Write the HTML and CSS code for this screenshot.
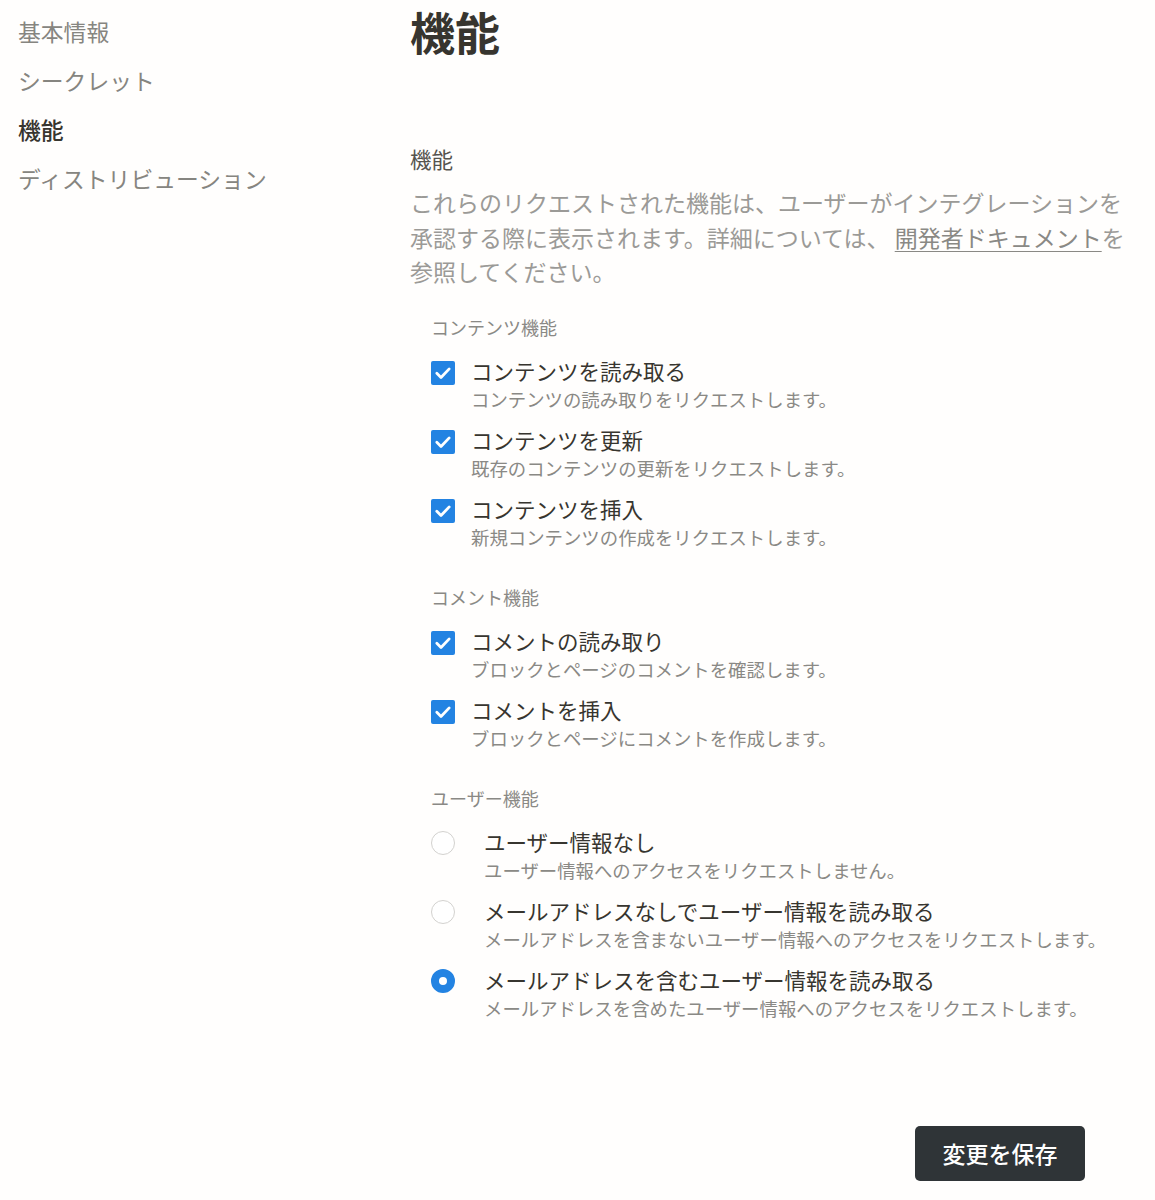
FILE: index.html
```html
<!DOCTYPE html>
<html lang="ja">
<head>
<meta charset="utf-8">
<title>機能</title>
<link rel="stylesheet" href="styles.css">
</head>
<body>
<div class="layout">
  <nav class="sidebar">
    <div class="nav-item">基本情報</div>
    <div class="nav-item">シークレット</div>
    <div class="nav-item active">機能</div>
    <div class="nav-item">ディストリビューション</div>
  </nav>
  <main class="main">
    <h1 class="title">機能</h1>
    <section class="section">
      <div class="section-label">機能</div>
      <p class="section-desc">これらのリクエストされた機能は、ユーザーがインテグレーションを承認する際に表示されます。詳細については、 <a class="link">開発者ドキュメント</a>を参照してください。</p>

      <div class="group">
        <div class="group-label">コンテンツ機能</div>
        <div class="option">
          <span class="checkbox"><svg viewBox="0 0 24 24" width="24" height="24"><path d="M5.8 12.3l4.2 4.2 8.2-8.6" fill="none" stroke="#fff" stroke-width="2.8" stroke-linecap="round" stroke-linejoin="round"/></svg></span>
          <div class="option-text">
            <div class="option-title">コンテンツを読み取る</div>
            <div class="option-desc">コンテンツの読み取りをリクエストします。</div>
          </div>
        </div>
        <div class="option">
          <span class="checkbox"><svg viewBox="0 0 24 24" width="24" height="24"><path d="M5.8 12.3l4.2 4.2 8.2-8.6" fill="none" stroke="#fff" stroke-width="2.8" stroke-linecap="round" stroke-linejoin="round"/></svg></span>
          <div class="option-text">
            <div class="option-title">コンテンツを更新</div>
            <div class="option-desc">既存のコンテンツの更新をリクエストします。</div>
          </div>
        </div>
        <div class="option">
          <span class="checkbox"><svg viewBox="0 0 24 24" width="24" height="24"><path d="M5.8 12.3l4.2 4.2 8.2-8.6" fill="none" stroke="#fff" stroke-width="2.8" stroke-linecap="round" stroke-linejoin="round"/></svg></span>
          <div class="option-text">
            <div class="option-title">コンテンツを挿入</div>
            <div class="option-desc">新規コンテンツの作成をリクエストします。</div>
          </div>
        </div>
      </div>

      <div class="group">
        <div class="group-label">コメント機能</div>
        <div class="option">
          <span class="checkbox"><svg viewBox="0 0 24 24" width="24" height="24"><path d="M5.8 12.3l4.2 4.2 8.2-8.6" fill="none" stroke="#fff" stroke-width="2.8" stroke-linecap="round" stroke-linejoin="round"/></svg></span>
          <div class="option-text">
            <div class="option-title">コメントの読み取り</div>
            <div class="option-desc">ブロックとページのコメントを確認します。</div>
          </div>
        </div>
        <div class="option">
          <span class="checkbox"><svg viewBox="0 0 24 24" width="24" height="24"><path d="M5.8 12.3l4.2 4.2 8.2-8.6" fill="none" stroke="#fff" stroke-width="2.8" stroke-linecap="round" stroke-linejoin="round"/></svg></span>
          <div class="option-text">
            <div class="option-title">コメントを挿入</div>
            <div class="option-desc">ブロックとページにコメントを作成します。</div>
          </div>
        </div>
      </div>

      <div class="group">
        <div class="group-label">ユーザー機能</div>
        <div class="option radio-option">
          <span class="radio"></span>
          <div class="option-text">
            <div class="option-title">ユーザー情報なし</div>
            <div class="option-desc">ユーザー情報へのアクセスをリクエストしません。</div>
          </div>
        </div>
        <div class="option radio-option">
          <span class="radio"></span>
          <div class="option-text">
            <div class="option-title">メールアドレスなしでユーザー情報を読み取る</div>
            <div class="option-desc">メールアドレスを含まないユーザー情報へのアクセスをリクエストします。</div>
          </div>
        </div>
        <div class="option radio-option">
          <span class="radio checked"></span>
          <div class="option-text">
            <div class="option-title">メールアドレスを含むユーザー情報を読み取る</div>
            <div class="option-desc">メールアドレスを含めたユーザー情報へのアクセスをリクエストします。</div>
          </div>
        </div>
      </div>
    </section>
    <div class="actions">
      <button class="save-btn">変更を保存</button>
    </div>
  </main>
</div>
</body>
</html>
```
FILE: styles.css
```css
html, body {
  margin: 0;
  padding: 0;
  background: #fffefd;
}
body {
  font-family: "Noto Sans CJK JP", "Noto Sans", sans-serif;
  color: #37352f;
  width: 1155px;
  height: 1200px;
  overflow: hidden;
}
.layout {
  display: flex;
}
.sidebar {
  width: 410px;
  flex: none;
  padding: 7px 0 0 18px;
  box-sizing: border-box;
}
.nav-item {
  font-size: 22.8px;
  line-height: 49px;
  color: #868580;
}
.nav-item.active {
  color: #37352f;
  font-weight: 500;
}
.main {
  width: 726px;
  flex: none;
  padding-top: 5px;
}
.title {
  margin: 0;
  font-size: 45px;
  line-height: 54px;
  font-weight: 700;
  color: #37352f;
}
.section {
  margin-top: 85px;
}
.section-label {
  font-size: 21.5px;
  line-height: 30px;
  color: #55534e;
}
.section-desc {
  margin: 11px 0 0;
  font-size: 23px;
  line-height: 34.5px;
  color: #9b9a97;
}
.link {
  color: #8a8985;
  text-decoration: underline;
  text-underline-offset: 4px;
  text-decoration-thickness: 1px;
}
.group {
  padding-left: 21px;
  margin-top: 25px;
}
.group + .group {
  margin-top: 33px;
}
.group-label {
  font-size: 18px;
  line-height: 27px;
  color: #8a8985;
  margin-bottom: 15px;
}
.option {
  display: flex;
  align-items: flex-start;
  gap: 16px;
  margin-bottom: 12px;
}
.radio-option {
  gap: 29px;
}
.option-text {
  display: flex;
  flex-direction: column;
}
.option-title {
  font-size: 21.5px;
  line-height: 30px;
  color: #37352f;
}
.option-desc {
  font-size: 18.4px;
  line-height: 27px;
  color: #8a8985;
}
.checkbox {
  width: 24px;
  height: 24px;
  flex: none;
  margin-top: 5px;
  background: #2383e2;
  border-radius: 2px;
  display: flex;
}
.radio {
  width: 24px;
  height: 24px;
  flex: none;
  margin-top: 4px;
  box-sizing: border-box;
  border: 1.5px solid #d3d2cf;
  border-radius: 50%;
  background: #fff;
}
.radio.checked {
  border: 8px solid #2383e2;
  background: #fff;
}
.actions {
  display: flex;
  justify-content: flex-end;
  margin-top: 104px;
  padding-right: 51px;
}
.save-btn {
  width: 170px;
  height: 55px;
  border: none;
  border-radius: 5px;
  background: #2f3437;
  color: #ffffff;
  font-family: "Noto Sans CJK JP", "Noto Sans", sans-serif;
  font-size: 23px;
  font-weight: 500;
  padding: 0;
}
```
